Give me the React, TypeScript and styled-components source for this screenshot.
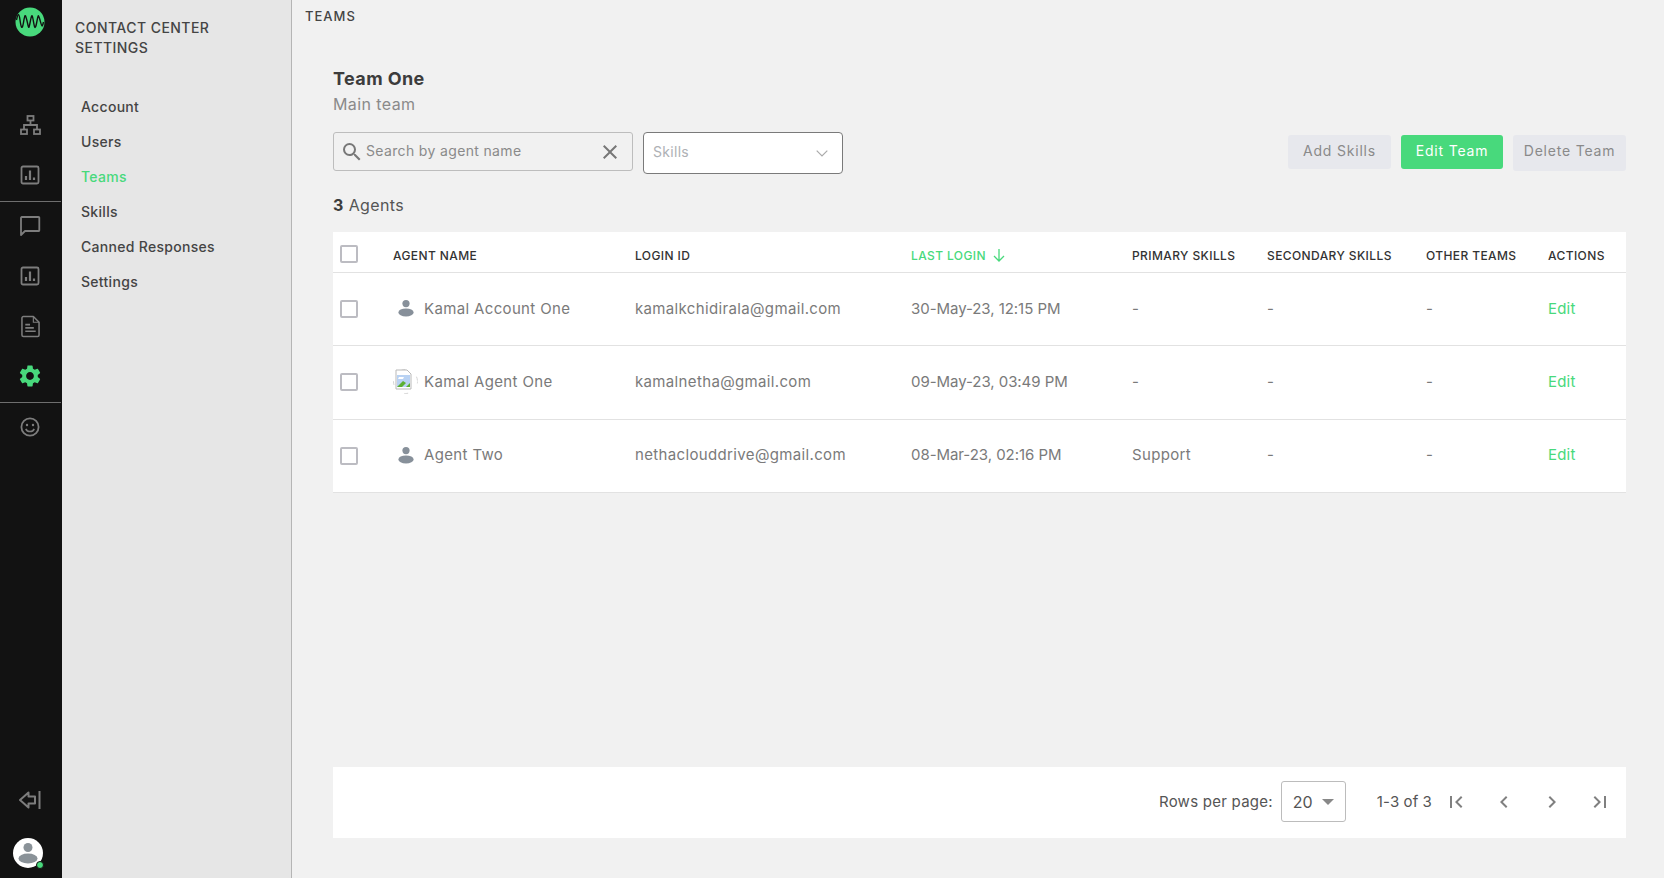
import { FC } from "react";
import styled, { createGlobalStyle } from "styled-components";
import {
  MdChevronLeft,
  MdChevronRight,
  MdClose,
  MdFirstPage,
  MdLastPage,
  MdOutlineSearch,
  MdSettings,
} from "react-icons/md";

const GREEN = "#48d97c";

const GlobalStyle = createGlobalStyle`
  html, body {
    margin: 0;
    padding: 0;
    height: 100%;
    overflow: hidden;
  }
  body {
    font-family: Inter, "Liberation Sans", sans-serif;
    background: #f1f1f1;
  }
  * {
    box-sizing: border-box;
  }
`;

const navItems = ["Account", "Users", "Teams", "Skills", "Canned Responses", "Settings"];

const agents = [
  { name: "Kamal Account One", login: "kamalkchidirala@gmail.com", last: "30-May-23, 12:15 PM", skills: "-", broken: false },
  { name: "Kamal Agent One", login: "kamalnetha@gmail.com", last: "09-May-23, 03:49 PM", skills: "-", broken: true },
  { name: "Agent Two", login: "nethaclouddrive@gmail.com", last: "08-Mar-23, 02:16 PM", skills: "Support", broken: false },
];

const OrgIcon = () => (
  <svg width="21" height="20" viewBox="0 0 21 20" fill="none" stroke="currentColor" strokeWidth="1.8">
    <rect x="7.5" y="1" width="6" height="4.5" />
    <rect x="1" y="14.5" width="6" height="4.5" />
    <rect x="14" y="14.5" width="6" height="4.5" />
    <path d="M10.5 5.500v4.500M4 14.500V10h13v4.500" />
  </svg>
);

const ChartIcon = () => (
  <svg width="20" height="20" viewBox="0 0 20 20" fill="none" stroke="currentColor" strokeWidth="1.8">
    <rect x="1.500" y="1.500" width="17" height="17" rx="1.500" />
    <path d="M6 15v-4M10 15V5.500M14 15v-2.500" strokeWidth="2.200" />
  </svg>
);

const ChatIcon = () => (
  <svg width="22" height="22" viewBox="0 0 22 22" fill="none" stroke="currentColor" strokeWidth="1.800">
    <path d="M2.500 2h17a.8.8 0 0 1 .8.8v12.400a.8.8 0 0 1-.8.8H6l-4 4V2.800a.8.8 0 0 1 .5-.8z" strokeLinejoin="round" />
  </svg>
);

const DocIcon = () => (
  <svg width="19" height="26" viewBox="0 -3 20 26" fill="none" stroke="currentColor" strokeWidth="1.600">
    <path d="M2.500 0h10.500l6 6v13.500a1.500 1.500 0 0 1-1.500 1.500h-15A1.500 1.500 0 0 1 1 19.500V1.500A1.500 1.500 0 0 1 2.500 0z" strokeLinejoin="round" />
    <path d="M13 0v6h6" strokeWidth="1.200" />
    <path d="M4.500 8.500h5M4.500 12h9M4.500 15.500h11" strokeWidth="1.700" />
  </svg>
);

const SmileIcon = () => (
  <svg width="20" height="20" viewBox="0 0 20 20" fill="none" stroke="currentColor" strokeWidth="1.800">
    <circle cx="10" cy="10" r="8.600" />
    <circle cx="7" cy="8" r="1.200" fill="currentColor" stroke="none" />
    <circle cx="13" cy="8" r="1.200" fill="currentColor" stroke="none" />
    <path d="M5.800 11.800a4.600 4.600 0 0 0 8.400 0" strokeWidth="1.600" />
  </svg>
);

const CollapseIcon = () => (
  <svg width="24" height="20" viewBox="0 0 24 20" fill="none" stroke="currentColor" strokeWidth="2">
    <path d="M10.500 2.500 2 10l8.500 7.500V13.500H17v-7h-6.500z" strokeLinejoin="round" />
    <path d="M21.500 1v18" />
  </svg>
);

const Logo = () => (
  <svg width="30" height="30" viewBox="0 0 30 30">
    <circle cx="15" cy="15" r="14.500" fill={GREEN} />
    <path
      d="M1.500 13 C3 6 4 6 5 13 S7 24 8.400 16 S10 6 11.800 13 S13.500 24 15 16 S17 6 18.200 13 S20 24 21.600 16 S23 6 25 13 S27 21 28.500 15"
      fill="none"
      stroke="#121212"
      strokeWidth="1.400"
    />
  </svg>
);

const PersonGlyph: FC<{ size: number }> = ({ size }) => (
  <svg width={size} height={size} viewBox="0 0 30 30" fill="currentColor">
    <circle cx="15" cy="9.500" r="4.500" />
    <ellipse cx="15" cy="20.500" rx="9.500" ry="5" />
  </svg>
);

const BrokenImage = () => (
  <svg width="25" height="25" viewBox="0 0 25 25">
    <circle cx="12.500" cy="12.500" r="12" fill="none" stroke="#c9c9c9" strokeWidth="0.800" strokeDasharray="4 14" strokeDashoffset="2" />
    <path d="M3 1h11l4 4v15H3z" fill="#fff" stroke="#b9b9b9" strokeWidth="1" />
    <rect x="4" y="6" width="13" height="12" fill="#b9d2f3" />
    <path d="M4 18l6-6 3 2-4 4z" fill="#5cb030" />
    <path d="M13 18l4-4v4z" fill="#5cb030" />
    <path d="M6 8h5l-1 2H5z" fill="#fff" />
  </svg>
);

const App: FC = () => {
  return (
    <Layout>
      <GlobalStyle />
      <Rail>
        <LogoWrap>
          <Logo />
        </LogoWrap>
        <RailGroup>
          <RailIcon><OrgIcon /></RailIcon>
          <RailIcon><ChartIcon /></RailIcon>
        </RailGroup>
        <RailDivider />
        <RailGroup>
          <RailIcon><ChatIcon /></RailIcon>
          <RailIcon><ChartIcon /></RailIcon>
          <RailIcon><DocIcon /></RailIcon>
          <RailIcon $active><MdSettings size={26} /></RailIcon>
        </RailGroup>
        <RailDivider />
        <RailGroup>
          <RailIcon><SmileIcon /></RailIcon>
        </RailGroup>
        <RailBottom>
          <RailIcon><CollapseIcon /></RailIcon>
          <UserBadge>
            <PersonGlyph size={30} />
            <OnlineDot />
          </UserBadge>
        </RailBottom>
      </Rail>

      <SidePanel>
        <PanelTitle>Contact Center Settings</PanelTitle>
        <PanelNav>
          {navItems.map((item) => (
            <PanelLink key={item} $active={item === "Teams"}>
              {item}
            </PanelLink>
          ))}
        </PanelNav>
      </SidePanel>

      <Main>
        <PageLabel>TEAMS</PageLabel>
        <Content>
          <TeamName>Team One</TeamName>
          <TeamSub>Main team</TeamSub>

          <Toolbar>
            <SearchBox>
              <MdOutlineSearch size={24} />
              <SearchText>Search by agent name</SearchText>
              <MdClose size={24} />
            </SearchBox>
            <SkillsBox>
              <span>Skills</span>
              <svg width="12" height="7" viewBox="0 0 12 7" fill="none" stroke="#aaa" strokeWidth="1.200">
                <path d="M.7.700 6 6l5.300-5.300" />
              </svg>
            </SkillsBox>
            <Actions>
              <ActionButton $w={103}>Add Skills</ActionButton>
              <ActionButton $w={102} $primary>Edit Team</ActionButton>
              <ActionButton $w={113} $h={36}>Delete Team</ActionButton>
            </Actions>
          </Toolbar>

          <AgentCount><b>3</b> Agents</AgentCount>

          <Table>
            <HeadRow>
              <HeadCheck />
              <HeadCell>AGENT NAME</HeadCell>
              <HeadCell>LOGIN ID</HeadCell>
              <HeadCell $sorted>
                LAST LOGIN
                <svg width="12" height="13" viewBox="0 0 12 13" fill="none" stroke={GREEN} strokeWidth="1.300">
                  <path d="M6 0v12M1 7l5 5 5-5" />
                </svg>
              </HeadCell>
              <HeadCell>PRIMARY SKILLS</HeadCell>
              <HeadCell>SECONDARY SKILLS</HeadCell>
              <HeadCell>OTHER TEAMS</HeadCell>
              <HeadCell>ACTIONS</HeadCell>
            </HeadRow>
            {agents.map((a) => (
              <BodyRow key={a.name}>
                <Check />
                <NameCell>
                  <Avatar>
                    {a.broken ? <BrokenImage /> : <PersonGlyph size={24} />}
                  </Avatar>
                  {a.name}
                </NameCell>
                <Cell>{a.login}</Cell>
                <DateCell>{a.last}</DateCell>
                <Cell>{a.skills}</Cell>
                <Cell>-</Cell>
                <Cell>-</Cell>
                <EditLink>Edit</EditLink>
              </BodyRow>
            ))}
          </Table>

          <Pager>
            <PagerLabel>Rows per page:</PagerLabel>
            <RowsSelect>
              <span>20</span>
              <Caret />
            </RowsSelect>
            <PagerRange>1-3 of 3</PagerRange>
            <PagerButtons>
              <PagerIcon><MdFirstPage size={24} /></PagerIcon>
              <PagerIcon><MdChevronLeft size={24} /></PagerIcon>
              <PagerIcon><MdChevronRight size={24} /></PagerIcon>
              <PagerIcon><MdLastPage size={24} /></PagerIcon>
            </PagerButtons>
          </Pager>
        </Content>
      </Main>
    </Layout>
  );
};

const Layout = styled.div`
  display: flex;
  height: 878px;
  width: 1664px;
  overflow: hidden;
`;

const Rail = styled.aside`
  width: 62px;
  flex-shrink: 0;
  background: #121212;
  display: flex;
  flex-direction: column;
  align-items: stretch;
  color: #7d7d7d;
`;

const LogoWrap = styled.div`
  height: 100px;
  padding: 7px 3px 0 0;
  display: flex;
  justify-content: center;
  align-items: flex-start;
`;

const RailGroup = styled.div`
  display: flex;
  flex-direction: column;
`;

const RailIcon = styled.div<{ $active?: boolean }>`
  height: 50px;
  padding-right: 2px;
  display: flex;
  align-items: center;
  justify-content: center;
  color: ${(p) => (p.$active ? GREEN : "#7d7d7d")};
`;

const RailDivider = styled.div`
  height: 1px;
  background: #6e6e6e;
  margin: 1px 1px -1px 0;
`;

const RailBottom = styled.div`
  margin-top: auto;
  display: flex;
  flex-direction: column;
  align-items: stretch;
  padding-bottom: 10px;
  gap: 13px;
`;

const UserBadge = styled.div`
  position: relative;
  align-self: center;
  width: 30px;
  height: 30px;
  margin-right: 6px;
  border-radius: 50%;
  background: #fff;
  color: #8a9298;
`;

const OnlineDot = styled.span`
  position: absolute;
  right: -1px;
  bottom: -1px;
  width: 8px;
  height: 8px;
  border-radius: 50%;
  background: ${GREEN};
  border: 1px solid #121212;
`;

const SidePanel = styled.nav`
  width: 230px;
  flex-shrink: 0;
  background: #e6e6e6;
  border-right: 1px solid #b5b5b5;
  padding: 18px 0 0 13px;
`;

const PanelTitle = styled.div`
  width: 170px;
  font-size: 14px;
  line-height: 20px;
  font-weight: 500;
  letter-spacing: 0.45px;
  text-transform: uppercase;
  color: #444;
`;

const PanelNav = styled.div`
  margin-top: 31px;
  padding-left: 6px;
  display: flex;
  flex-direction: column;
`;

const PanelLink = styled.a<{ $active?: boolean }>`
  height: 35px;
  display: flex;
  align-items: center;
  font-size: 14px;
  font-weight: 500;
  letter-spacing: 0.3px;
  color: ${(p) => (p.$active ? GREEN : "#444")};
`;

const Main = styled.main`
  flex: 1;
  min-width: 0;
  display: flex;
  flex-direction: column;
  background: #f1f1f1;
`;

const PageLabel = styled.div`
  height: 32px;
  padding-left: 13px;
  display: flex;
  align-items: center;
  font-size: 13px;
  font-weight: 500;
  letter-spacing: 1px;
  color: #444;
`;

const Content = styled.div`
  flex: 1;
  display: flex;
  flex-direction: column;
  padding: 36px 38px 40px 41px;
`;

const TeamName = styled.div`
  font-size: 18px;
  line-height: 22px;
  font-weight: 700;
  letter-spacing: 0.4px;
  color: #3c3c3c;
`;

const TeamSub = styled.div`
  margin-top: 3px;
  font-size: 16px;
  line-height: 22px;
  letter-spacing: 0.4px;
  color: #8a8a8a;
`;

const Toolbar = styled.div`
  margin-top: 17px;
  display: flex;
  align-items: flex-start;
  gap: 10px;
`;

const SearchBox = styled.div`
  width: 300px;
  height: 39px;
  border: 1px solid #bdbdbd;
  border-radius: 3px;
  padding: 0 10px 0 6px;
  display: flex;
  align-items: center;
  gap: 2px;
  color: #777;
`;

const SearchText = styled.span`
  flex: 1;
  padding-bottom: 3px;
  font-size: 14px;
  letter-spacing: 0.35px;
  color: #8a8a8a;
`;

const SkillsBox = styled.div`
  width: 200px;
  height: 42px;
  background: #fff;
  border: 1px solid #7a7a7a;
  border-radius: 4px;
  padding: 0 14px 0 9px;
  display: flex;
  align-items: center;
  justify-content: space-between;
  font-size: 14px;
  letter-spacing: 0.3px;
  color: #aeb1b5;

  span {
    padding-bottom: 3px;
  }
`;

const Actions = styled.div`
  margin-left: auto;
  padding-top: 3px;
  display: flex;
  align-items: flex-start;
  gap: 10px;
`;

const ActionButton = styled.button<{ $primary?: boolean; $w: number; $h?: number }>`
  width: ${(p) => p.$w}px;
  height: ${(p) => p.$h ?? 34}px;
  border: 0;
  border-radius: 3px;
  padding: 0 0 ${(p) => (p.$h ? 5 : 3)}px;
  font-family: inherit;
  font-size: 14px;
  letter-spacing: 0.8px;
  background: ${(p) => (p.$primary ? GREEN : "#e7e8ed")};
  color: ${(p) => (p.$primary ? "#fff" : "#8a8a8a")};
`;

const AgentCount = styled.div`
  margin-top: 20px;
  font-size: 16px;
  line-height: 22px;
  letter-spacing: 0.4px;
  color: #555;

  b {
    font-weight: 700;
    color: #3c3c3c;
  }
`;

const Table = styled.div`
  margin-top: 16px;
  background: #fff;
  display: flex;
  flex-direction: column;
`;

const columns = "60px 242px 276px 221px 135px 159px 122px 78px";

const HeadRow = styled.div`
  height: 41px;
  display: grid;
  grid-template-columns: ${columns};
  align-items: center;
  border-bottom: 1px solid #e2e2e2;
`;

const BodyRow = styled.div`
  height: 73.330px;
  display: grid;
  grid-template-columns: ${columns};
  align-items: center;
  border-bottom: 1px solid #e2e2e2;
`;

const Check = styled.span`
  width: 18px;
  height: 18px;
  margin-left: 7px;
  border: 2px solid #bcbcc2;
  border-radius: 2px;
  background: #fff;
`;

const HeadCheck = styled(Check)`
  margin-top: 4px;
`;

const HeadCell = styled.div<{ $sorted?: boolean }>`
  display: flex;
  align-items: center;
  gap: 7px;
  font-size: 12px;
  font-weight: 500;
  letter-spacing: 0.4px;
  padding-top: 7px;
  color: ${(p) => (p.$sorted ? GREEN : "#333")};
`;

const Cell = styled.div`
  padding-bottom: 2px;
  font-size: 15px;
  letter-spacing: 0.35px;
  color: #7a7a7a;
`;

const DateCell = styled(Cell)`
  letter-spacing: -0.05px;
`;

const NameCell = styled(Cell)`
  display: flex;
  align-items: center;
  gap: 6px;
`;

const Avatar = styled.span`
  width: 25px;
  height: 25px;
  display: flex;
  align-items: center;
  justify-content: center;
  color: #87909a;
`;

const EditLink = styled.a`
  padding-bottom: 2px;
  font-size: 15px;
  letter-spacing: 0.2px;
  color: ${GREEN};
`;

const Pager = styled.div`
  margin-top: auto;
  height: 71px;
  background: #fff;
  padding: 0 14px 2px 0;
  display: flex;
  align-items: center;
  justify-content: flex-end;
  color: #555;
  font-size: 15px;
`;

const PagerLabel = styled.span`
  padding-bottom: 1px;
  letter-spacing: 0.25px;
`;

const RowsSelect = styled.div`
  width: 65px;
  height: 41px;
  margin-left: 8px;
  padding: 0 11px;
  border: 1px solid #bcbcbc;
  border-radius: 3px;
  font-size: 16px;
  display: flex;
  align-items: center;
  justify-content: space-between;
`;

const Caret = styled.span`
  width: 0;
  height: 0;
  border-left: 6px solid transparent;
  border-right: 6px solid transparent;
  border-top: 6px solid #888;
`;

const PagerRange = styled.span`
  margin-left: 31px;
  padding-bottom: 1px;
  letter-spacing: 0.1px;
`;

const PagerButtons = styled.div`
  margin-left: 12px;
  display: flex;
  gap: 24px;
`;

const PagerIcon = styled.span`
  width: 24px;
  height: 24px;
  color: #808080;
`;

export default App;
